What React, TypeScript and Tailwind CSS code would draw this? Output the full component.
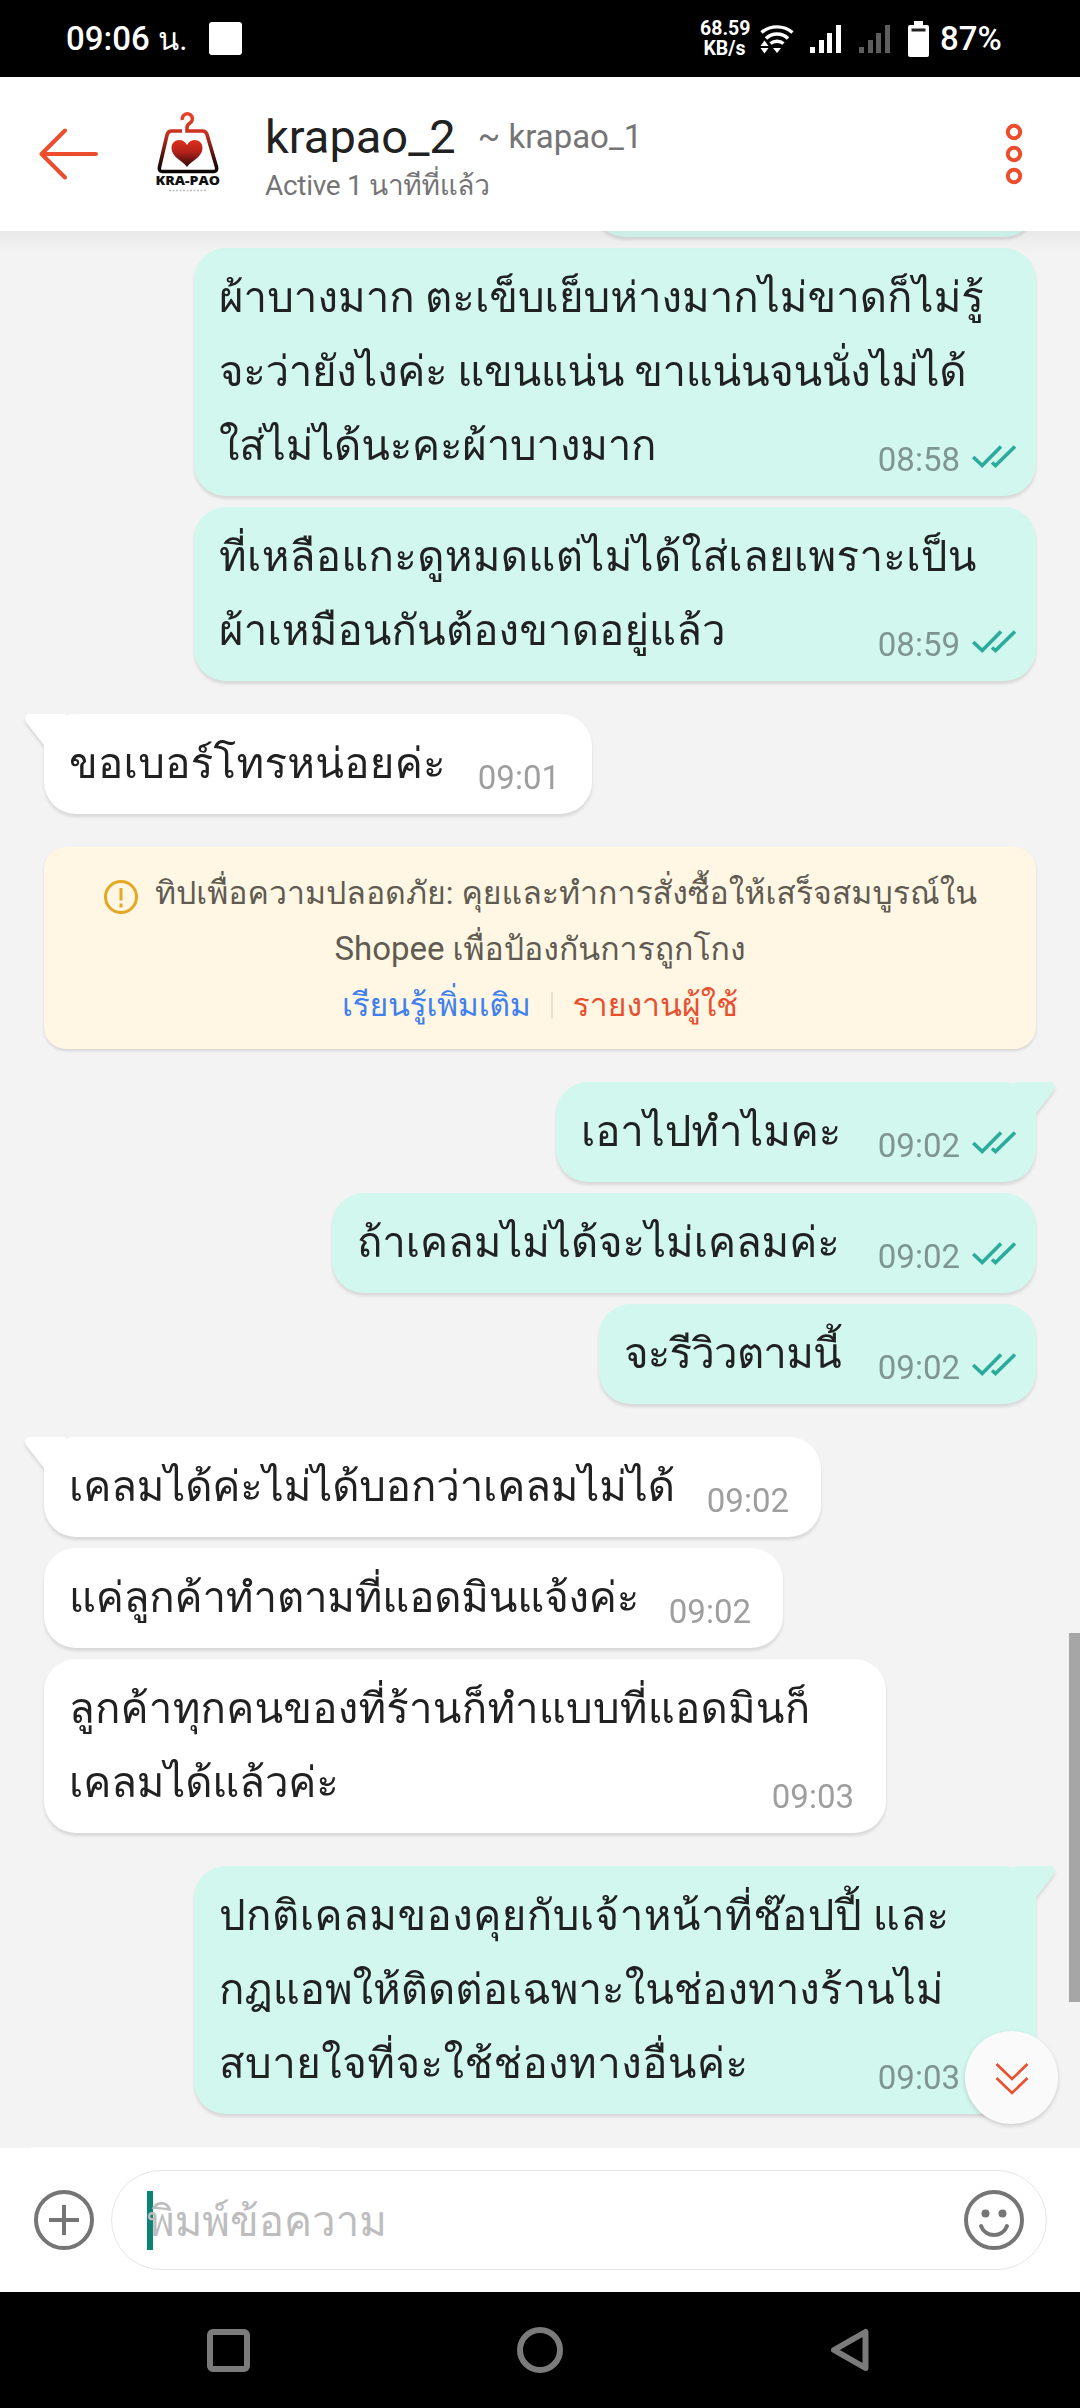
import React from 'react'

type Message = {
  side: 'in' | 'out'
  lines: { text: string; spacing?: string }[]
  time: string
  width: string
  tail?: boolean
  gap?: string
}

const firstMessages: Message[] = [
  {
    side: 'out',
    width: 'w-[842px]',
    time: '08:58',
    lines: [
      { text: 'ผ้าบางมาก ตะเข็บเย็บห่างมากไม่ขาดก็ไม่รู้' },
      { text: 'จะว่ายังไงค่ะ แขนแน่น ขาแน่นจนนั่งไม่ได้', spacing: 'tracking-[-0.35px]' },
      { text: 'ใส่ไม่ได้นะคะผ้าบางมาก', spacing: 'tracking-[-0.2px]' },
    ],
  },
  {
    side: 'out',
    width: 'w-[842px]',
    time: '08:59',
    lines: [
      { text: 'ที่เหลือแกะดูหมดแต่ไม่ได้ใส่เลยเพราะเป็น', spacing: 'tracking-[0.3px]' },
      { text: 'ผ้าเหมือนกันต้องขาดอยู่แล้ว', spacing: 'tracking-[0.1px]' },
    ],
  },
  {
    side: 'in',
    width: 'w-[548px]',
    time: '09:01',
    tail: true,
    gap: 'mt-[33px]',
    lines: [{ text: 'ขอเบอร์โทรหน่อยค่ะ', spacing: 'tracking-[0.3px]' }],
  },
]

const lastMessages: Message[] = [
  {
    side: 'out',
    width: 'w-[480px]',
    time: '09:02',
    tail: true,
    gap: 'mt-[33px]',
    lines: [{ text: 'เอาไปทำไมคะ', spacing: 'tracking-[-0.15px]' }],
  },
  { side: 'out', width: 'w-[704px]', time: '09:02', lines: [{ text: 'ถ้าเคลมไม่ได้จะไม่เคลมค่ะ', spacing: 'tracking-[-0.1px]' }] },
  { side: 'out', width: 'w-[437px]', time: '09:02', lines: [{ text: 'จะรีวิวตามนี้', spacing: 'tracking-[-0.8px]' }] },
  {
    side: 'in',
    width: 'w-[777px]',
    time: '09:02',
    tail: true,
    gap: 'mt-[33px]',
    lines: [{ text: 'เคลมได้ค่ะไม่ได้บอกว่าเคลมไม่ได้', spacing: 'tracking-[-0.15px]' }],
  },
  { side: 'in', width: 'w-[739px]', time: '09:02', lines: [{ text: 'แค่ลูกค้าทำตามที่แอดมินแจ้งค่ะ', spacing: 'tracking-[-0.2px]' }] },
  {
    side: 'in',
    width: 'w-[842px]',
    time: '09:03',
    lines: [
      { text: 'ลูกค้าทุกคนของที่ร้านก็ทำแบบที่แอดมินก็', spacing: 'tracking-[0.2px]' },
      { text: 'เคลมได้แล้วค่ะ', spacing: 'tracking-[-0.15px]' },
    ],
  },
  {
    side: 'out',
    width: 'w-[842px]',
    time: '09:03',
    tail: true,
    gap: 'mt-[33px]',
    lines: [
      { text: 'ปกติเคลมของคุยกับเจ้าหน้าที่ช๊อปปี้ และ', spacing: 'tracking-[0.45px]' },
      { text: 'กฎแอพให้ติดต่อเฉพาะในช่องทางร้านไม่' },
      { text: 'สบายใจที่จะใช้ช่องทางอื่นค่ะ', spacing: 'tracking-[0.45px]' },
    ],
  },
]

const SignalBars = ({ color }: { color: string }) => (
  <svg width="32" height="28" viewBox="0 0 32 28" className={color} fill="currentColor">
    <rect x="0" y="22" width="5" height="6" />
    <rect x="9" y="15" width="5" height="13" />
    <rect x="17" y="8" width="5" height="20" />
    <rect x="26" y="0" width="5" height="28" />
  </svg>
)

const StatusBar = () => (
  <div className="h-[77px] bg-black text-white flex items-center pl-[66px] pr-[77px] font-medium text-[33px]">
    <span className="w-[123px] leading-[77px] whitespace-nowrap">09:06 <span className="font-normal text-[31px]">น.</span></span>
    <div className="w-[33px] h-[33px] ml-[20px] bg-white rounded-[3px]" />
    <div className="ml-auto w-[49px] text-[19.5px] leading-[20px] text-center font-bold">
      <div>68.59</div>
      <div>KB/s</div>
    </div>
    <svg width="34" height="30" viewBox="0 0 34 30" className="ml-[11px]" fill="none" stroke="white" strokeWidth="3.4">
      <path d="M1.5 8.5C10 1 24 1 32.500 8.500" />
      <path d="M6 14.500C12 8.500 22 8.500 28 14.500" />
      <path d="M10.500 19.500C14 16.500 20 16.500 23.500 19.500" />
      <path d="M13 24h8l-4 5zM0.500 22h8l-4-5.500zM0.500 24h8l-4 5.500z" fill="white" stroke="none" />
    </svg>
    <div className="ml-[16px]"><SignalBars color="text-white" /></div>
    <div className="ml-[17px]"><SignalBars color="text-[#5e5e5e]" /></div>
    <svg width="21" height="36" viewBox="0 0 21 36" className="ml-[17px]">
      <path d="M6 0h9v4h4a2 2 0 0 1 2 2v28a2 2 0 0 1-2 2H2a2 2 0 0 1-2-2V6a2 2 0 0 1 2-2h4z" fill="white" />
      <rect x="3.500" y="7.500" width="14" height="3" fill="#222" />
    </svg>
    <span className="ml-[11px] w-[63px] leading-[77px]">87%</span>
  </div>
)

const ShopLogo = () => (
  <svg width="100" height="100" viewBox="0 0 100 100">
    <defs>
      <linearGradient id="hanger" gradientUnits="userSpaceOnUse" x1="0" y1="12" x2="0" y2="70">
        <stop offset="0" stopColor="#e8432a" />
        <stop offset="0.350" stopColor="#c8301f" />
        <stop offset="0.800" stopColor="#3a0f0c" />
        <stop offset="1" stopColor="#0a0505" />
      </linearGradient>
      <linearGradient id="heart" x1="0" y1="0" x2="0" y2="1">
        <stop offset="0" stopColor="#df2f1c" />
        <stop offset="0.450" stopColor="#b3221a" />
        <stop offset="1" stopColor="#2a0807" />
      </linearGradient>
    </defs>
    <path
      d="M43.500 19a5 5 0 1 1 7.500 3c-2 1.200-3 2-3 4.500v3.500h15.500q3.500 0 4.500 3.500L77.500 66q1 4.500-3 4.500h-51q-4 0-3-4.500L28 34q1-4 4.500-4H43"
      fill="none"
      stroke="url(#hanger)"
      strokeWidth="3.600"
    />
    <path d="M48 66C44 60 32.500 56 32.500 47c0-9 11.500-11 15.500-3 4-8 15.500-6 15.500 3 0 9-11.500 13-15.500 19z" fill="url(#heart)" />
    <text x="16.500" y="83.500" textLength="64.500" lengthAdjust="spacingAndGlyphs" fontSize="12.500" className="font-extrabold font-['Open_Sans']" fill="#111">KRA-PAO</text>
    <path d="M30 89.500h37" stroke="#bbb" strokeWidth="1.500" strokeDasharray="2 1.500" />
  </svg>
)

const ChatHeader = () => (
  <div className="h-[154px] bg-white flex items-center">
    <svg width="60" height="54" viewBox="0 0 60 54" className="ml-[39px]" fill="none" stroke="#ee4d2d" strokeWidth="4" strokeLinecap="round" strokeLinejoin="round">
      <path d="M57 27H2.500M26 3.500L2.500 27L26 50.500" />
    </svg>
    <div className="ml-[40px] w-[100px] h-[100px] -mt-[7px]"><ShopLogo /></div>
    <div className="ml-[26px] flex-1">
      <div className="flex items-baseline h-[56px] leading-[56px] mt-[7px]">
        <span className="text-[47px] text-[#212121]">krapao_2</span>
        <span className="relative bottom-[5px] ml-[22px] text-[33px] text-[#757575]">~ krapao_1</span>
      </div>
      <div className="mt-[1px] text-[28px] h-[40px] leading-[40px] tracking-[-0.3px] text-[#757575]">Active 1 นาทีที่แล้ว</div>
    </div>
    <svg width="18" height="64" viewBox="0 0 18 64" className="mr-[57px]" fill="none" stroke="#ee4d2d" strokeWidth="4">
      <circle cx="9" cy="10" r="6.200" />
      <circle cx="9" cy="32" r="6.200" />
      <circle cx="9" cy="54" r="6.200" />
    </svg>
  </div>
)

const Tail = ({ side }: { side: 'in' | 'out' }) =>
  side === 'in' ? (
    <svg width="40" height="34" viewBox="0 0 40 34" className="absolute top-0 left-[-19px]">
      <path d="M40 0H4Q-1.500 1 1 8L19 31H40z" fill="white" />
    </svg>
  ) : (
    <svg width="40" height="34" viewBox="0 0 40 34" className="absolute top-0 right-[-19px]">
      <path d="M0 0H36Q41.500 1 39 8L21 31H0z" fill="#d2f7ef" />
    </svg>
  )

const ReadTicks = () => (
  <svg width="44" height="23" viewBox="0 0 44 23" className="relative bottom-[3px] ml-[12px]" fill="none" stroke="#2bab9b" strokeWidth="3.600">
    <path d="M1.200 12l9 8.500L29 1.500M20 17.500l3.500 3L43 1.500" />
  </svg>
)

const Bubble = ({ message }: { message: Message }) => {
  const out = message.side === 'out'
  return (
    <div
      className={`relative shrink-0 py-[13px] pl-[25px] rounded-[32px] drop-shadow-[0_3px_1.5px_rgba(0,0,0,0.11)] ${message.width} ${message.gap ?? 'mt-[11px]'} ${
        out ? 'self-end bg-[#d2f7ef] pr-[20px]' : 'self-start bg-white pr-[32px]'
      }`}
    >
      {message.tail && <Tail side={message.side} />}
      {message.lines.map((line, i) => (
        <div key={i} className="relative h-[74px] flex items-baseline justify-between whitespace-nowrap">
          <span className={`text-[42px] leading-[74px] text-[#212121] ${line.spacing ?? ''}`}>{line.text}</span>
          {i === message.lines.length - 1 && (
            <span className={`relative top-[11px] flex items-baseline text-[33px] ${out ? 'text-[#7f9591]' : 'text-[#9e9e9e]'}`}>
              {message.time}
              {out && <ReadTicks />}
            </span>
          )}
        </div>
      ))}
    </div>
  )
}

const SafetyTip = () => (
  <div className="shrink-0 h-[202px] mt-[33px] pt-[18px] rounded-[22px] bg-[#fff7e3] shadow-[0_2px_3px_rgba(0,0,0,0.12)] text-[32px] leading-[56px] text-[#5f5b52] whitespace-nowrap flex flex-col items-center">
    <div className="flex items-center h-[56px]">
      <svg width="36" height="36" viewBox="0 0 36 36" className="mr-[16px] mt-[8px]" fill="none" stroke="#e5a823" strokeWidth="3">
        <circle cx="18" cy="18" r="15.500" />
        <path d="M18 9v12.500M18 24.500v4" />
      </svg>
      <span>ทิปเพื่อความปลอดภัย: คุยและทำการสั่งซื้อให้เสร็จสมบูรณ์ใน</span>
    </div>
    <div className="h-[56px]"><span className="text-[33px]">Shopee</span> เพื่อป้องกันการถูกโกง</div>
    <div className="h-[56px] flex items-center">
      <span className="tracking-[-0.3px] text-[#4080ee]">เรียนรู้เพิ่มเติม</span>
      <span className="w-[2px] h-[27px] mx-[20px] bg-[#e9e1cf]" />
      <span className="text-[#e8502f]">รายงานผู้ใช้</span>
    </div>
  </div>
)

const Composer = () => (
  <div className="h-[144px] bg-white flex items-center pl-[33px] pr-[33px]">
    <svg width="62" height="62" viewBox="0 0 62 62" fill="none" stroke="#757575" strokeWidth="4">
      <circle cx="31" cy="31" r="28" />
      <path d="M31 16v30M16 31h30" />
    </svg>
    <div className="ml-[16px] flex-1 h-[100px] border border-[#e6e6e6] rounded-full flex items-center pl-[35px] pr-[21px]">
      <div className="w-[6px] h-[59px] bg-[#0b8474]" />
      <span className="-ml-[6px] mt-[4px] text-[42px] leading-[74px] text-[#bdbdbd]">พิมพ์ข้อความ</span>
      <svg width="62" height="62" viewBox="0 0 62 62" className="ml-auto" fill="none" stroke="#757575" strokeWidth="4">
        <circle cx="31" cy="31" r="28" />
        <circle cx="22.500" cy="24.500" r="4" fill="#757575" stroke="none" />
        <circle cx="39.500" cy="24.500" r="4" fill="#757575" stroke="none" />
        <path d="M18 37c4.500 12 21.500 12 26 0" strokeLinecap="round" />
      </svg>
    </div>
  </div>
)

const NavigationBar = () => (
  <div className="h-[116px] bg-black flex items-center justify-between pl-[207px] pr-[211px]">
    <div className="w-[43px] h-[43px] border-[6px] border-[#7b7b7b] rounded-[6px]" />
    <div className="w-[46px] h-[46px] border-[6px] border-[#7b7b7b] rounded-full" />
    <svg width="39" height="44" viewBox="0 0 39 44" fill="none" stroke="#7b7b7b" strokeWidth="6" strokeLinejoin="round">
      <path d="M35.500 4v36L4 22z" />
    </svg>
  </div>
)

const App = () => {
  return (
    <div className="w-[1080px] h-[2408px] flex flex-col overflow-hidden bg-[#f3f3f3] font-[Roboto,Loma,'Noto_Sans',sans-serif]">
      <StatusBar />
      <ChatHeader />
      <div className="relative h-[1917px] overflow-hidden">
        <div className="flex flex-col pl-[44px] pr-[44px]">
          {/* end of a message that is scrolled under the header */}
          <div className="shrink-0 self-end w-[443px] h-[100px] -mt-[94px] rounded-[32px] bg-[#d2f7ef] shadow-[0_3px_3px_rgba(0,0,0,0.11)]" />
          {firstMessages.map((message, i) => <Bubble key={i} message={message} />)}
          <SafetyTip />
          {lastMessages.map((message, i) => <Bubble key={i} message={message} />)}
          <div className="shrink-0 w-[300px] h-[100px] mt-[33px] -ml-[19px] rounded-t-[8px] bg-white" />
        </div>
        <div className="absolute top-0 left-0 w-full h-[22px] bg-linear-to-b from-black/4 to-transparent" />
        <div className="absolute top-[1402px] right-0 w-[11px] h-[369px] bg-[#a6a6a6]" />
        <div className="absolute top-[1800px] right-[22px] w-[93px] h-[93px] rounded-full bg-[#fafafa] shadow-[0_2px_4px_rgba(0,0,0,0.16)] flex items-center justify-center">
          <svg width="34" height="34" viewBox="0 0 34 34" fill="none" stroke="#e8502f" strokeWidth="2.600">
            <path d="M1.500 3L17 18L32.500 3M1.500 17L17 32L32.500 17" />
          </svg>
        </div>
      </div>
      <Composer />
      <NavigationBar />
    </div>
  )
}
export default App
